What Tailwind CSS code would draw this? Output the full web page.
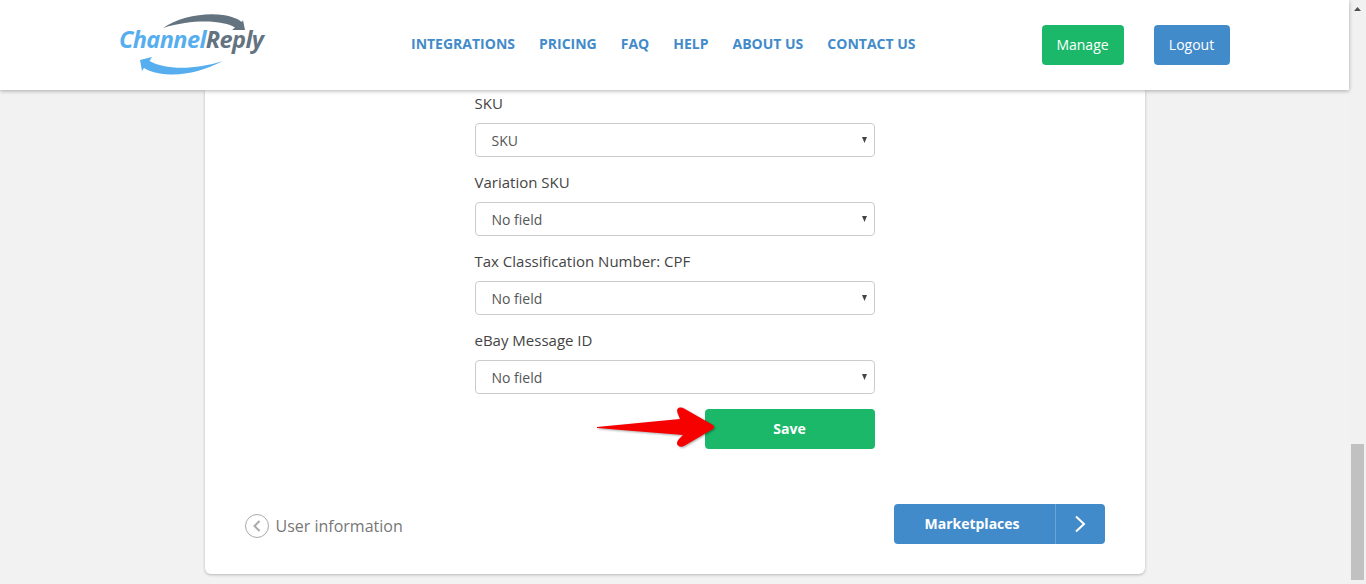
<!DOCTYPE html>
<html lang="en">
  <head>
    <meta charset="UTF-8" />
    <meta name="viewport" content="width=device-width, initial-scale=1.0" />
    <title>ChannelReply</title>
    <script src="https://cdn.jsdelivr.net/npm/@tailwindcss/browser@4"></script>
  </head>
  <body class="overflow-hidden bg-[#f2f2f2] font-['Open_Sans',sans-serif]">
    <div class="flex h-[584px] w-[1366px] overflow-hidden">
      <div class="w-[1349px] shrink-0">
        <!-- header -->
        <header class="relative z-10 flex h-[90px] items-center bg-white shadow-[0_1px_4px_rgba(0,0,0,0.3)]">
          <a class="relative ml-[120px] block h-[90px] w-[146px] shrink-0">
            <svg class="absolute top-0 left-0" width="146" height="90" viewBox="0 0 146 90">
              <path d="M43 28 C58 17 85 12 103 15 C112 16.500 118 19 122 22 L123 20 L125 30 L112 30 L115 27.500 C105 21 75 18 43 28 Z" fill="#63737f" />
              <path d="M103 61 C85 70 68 75 50 74.500 C38 74 28 71 24 68 L22 71 L20 60 L32 57 L29.500 61 C45 70 75 70 103 61 Z" fill="#56aeee" />
            </svg>
            <span class="absolute top-[23px] left-[-1px] text-[23.500px]/[33px] font-bold tracking-[-0.6px] whitespace-nowrap italic">
              <span class="text-[#56aeee]">Channel</span><span class="text-[#63737f]">Reply</span>
            </span>
          </a>
          <nav class="ml-[145px] flex gap-[24px] pb-[3px] text-[14px] font-bold text-[#428bca]">
            <a>INTEGRATIONS</a>
            <a>PRICING</a>
            <a>FAQ</a>
            <a>HELP</a>
            <a>ABOUT US</a>
            <a>CONTACT US</a>
          </nav>
          <a class="ml-[126px] flex h-[40px] w-[82px] items-center justify-center rounded-[4px] bg-[#1cb86a] pb-[1px] text-[14px] font-medium text-white">Manage</a>
          <a class="ml-[30px] flex h-[40px] w-[76px] items-center justify-center rounded-[4px] bg-[#428bca] pb-[1px] text-[14px] font-medium text-white">Logout</a>
        </header>

        <!-- card -->
        <main class="mx-auto h-[484px] w-[940px] rounded-b-[6px] bg-white pt-[3px] shadow-[0_1px_3px_rgba(0,0,0,0.25)]">
          <form class="mx-auto flex w-[400px] flex-col text-[15px] text-[#444]">
            <div class="flex flex-col gap-[3px]">
              <div class="flex flex-col">
                <label class="h-[30px] leading-[20px]">SKU</label>
                <div class="relative mb-[12px]">
                  <select class="h-[34px] w-full appearance-none rounded-[4px] border border-[#ccc] bg-white pl-[16px] text-[14px] text-[#555]"><option>SKU</option></select>
                  <svg class="absolute top-[14px] right-[8px]" width="5" height="6" viewBox="0 0 5 6"><path d="M0 0H5L2.500 6Z" fill="#444" /></svg>
                </div>
              </div>
              <div class="flex flex-col">
                <label class="h-[30px] leading-[20px]">Variation SKU</label>
                <div class="relative mb-[12px]">
                  <select class="h-[34px] w-full appearance-none rounded-[4px] border border-[#ccc] bg-white pl-[16px] text-[14px] text-[#555]"><option>No field</option></select>
                  <svg class="absolute top-[14px] right-[8px]" width="5" height="6" viewBox="0 0 5 6"><path d="M0 0H5L2.500 6Z" fill="#444" /></svg>
                </div>
              </div>
              <div class="flex flex-col">
                <label class="h-[30px] leading-[20px]">Tax Classification Number: CPF</label>
                <div class="relative mb-[12px]">
                  <select class="h-[34px] w-full appearance-none rounded-[4px] border border-[#ccc] bg-white pl-[16px] text-[14px] text-[#555]"><option>No field</option></select>
                  <svg class="absolute top-[14px] right-[8px]" width="5" height="6" viewBox="0 0 5 6"><path d="M0 0H5L2.500 6Z" fill="#444" /></svg>
                </div>
              </div>
              <div class="flex flex-col">
                <label class="h-[30px] leading-[20px]">eBay Message ID</label>
                <div class="relative mb-[12px]">
                  <select class="h-[34px] w-full appearance-none rounded-[4px] border border-[#ccc] bg-white pl-[16px] text-[14px] text-[#555]"><option>No field</option></select>
                  <svg class="absolute top-[14px] right-[8px]" width="5" height="6" viewBox="0 0 5 6"><path d="M0 0H5L2.500 6Z" fill="#444" /></svg>
                </div>
              </div>
            </div>
            <div class="relative mt-[3px] flex justify-end">
              <button type="button" class="h-[40px] w-[170px] rounded-[4px] bg-[#1cb86a] pb-[2px] text-[14px] font-bold text-white">Save</button>
              <svg class="absolute top-[-4px] left-[120px]" width="125" height="48" viewBox="0 0 125 48" style="filter:drop-shadow(1px 1px 1px rgba(0,0,0,0.35))">
                <path d="M2 22 L85 14 L82.500 8 Q81 3 85 2.500 Q87 2 89 3.500 L118 20 Q120 22 118 24 L89 41 Q85 43 82.500 40 Q81 37 84 34 L88 30 L2 23 Z" fill="#f60000" />
              </svg>
            </div>
          </form>
          <div class="mt-[55px] flex justify-between px-[40px]">
            <a class="mt-[10px] flex h-[24px] items-center gap-[7px] text-[16px] text-[#777]">
              <svg width="24" height="24" viewBox="0 0 24 24" fill="none"><circle cx="12" cy="12" r="11.500" stroke="#aaa" /><path d="M14.500 7 L9.500 12 L14.500 17" stroke="#aaa" stroke-width="2" /></svg>
              User information
            </a>
            <a class="flex h-[40px] w-[211px] rounded-[4px] bg-[#428bca] text-[14px] font-bold text-white">
              <span class="flex w-[162px] items-center justify-center border-r border-[#6ba5d8] pr-[4px] pb-[2px]">Marketplaces</span>
              <span class="flex flex-1 items-center justify-center">
                <svg width="12" height="18" viewBox="0 0 12 18" fill="none"><path d="M2 1.500 L10 9 L2 16.500" stroke="#fff" stroke-width="2" /></svg>
              </span>
            </a>
          </div>
        </main>
      </div>

      <!-- scrollbar -->
      <div class="relative w-[17px] shrink-0 bg-[#f1f1f1]">
        <svg class="absolute top-[7px] left-[5px]" width="7" height="4" viewBox="0 0 7 4"><path d="M3.500 0L7 4H0Z" fill="#505050" /></svg>
        <div class="absolute top-[444px] left-[2px] h-[136px] w-[13px] bg-[#c1c1c1]"></div>
      </div>
    </div>
  </body>
</html>
